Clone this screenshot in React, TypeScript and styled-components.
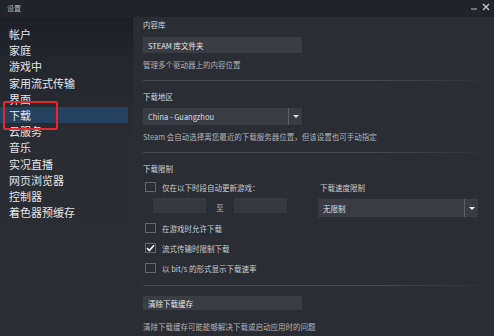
import React from "react";
import styled, { createGlobalStyle } from "styled-components";

const GlobalStyle = createGlobalStyle`
  html, body {
    margin: 0;
    padding: 0;
    background: #2a2d33;
  }
  body {
    font-family: "Noto Sans CJK SC", "Noto Sans", sans-serif;
  }
`;

const menu = [
  "帐户",
  "家庭",
  "游戏中",
  "家用流式传输",
  "界面",
  "下载",
  "云服务",
  "音乐",
  "实况直播",
  "网页浏览器",
  "控制器",
  "着色器预缓存",
];

const App = () => {
  return (
    <>
      <GlobalStyle />
      <Window>
        <TitleBar>
          <Title>设置</Title>
          <WinButtons>
            <svg width="7" height="7" viewBox="0 0 7 7">
              <path d="M0 6H6" stroke="#b9bdc2" strokeWidth="1" />
            </svg>
            <svg width="8" height="8" viewBox="0 0 8 8">
              <path d="M1 1L7 7M7 1L1 7" stroke="#c9cdd1" strokeWidth="1.3" />
            </svg>
          </WinButtons>
        </TitleBar>

        <Body>
          <Sidebar>
            {menu.map((m) => (
              <MenuItem key={m} $active={m === "下载"}>
                {m}
              </MenuItem>
            ))}
            <Mark />
          </Sidebar>

          <Content>
            <Header>内容库</Header>
            <Button>STEAM 库文件夹</Button>
            <Desc>管理多个驱动器上的内容位置</Desc>
            <Divider />

            <Header $top={11}>下载地区</Header>
            <Select $width={159}>
              <span>China - Guangzhou</span>
              <Caret />
            </Select>
            <Desc>Steam 会自动选择离您最近的下载服务器位置，但该设置也可手动指定</Desc>
            <Divider />

            <Header $top={11}>下载限制</Header>
            <LimitRow>
              <LeftCol>
                <CheckRow $top={8}>
                  <Box />
                  仅在以下时段自动更新游戏：
                </CheckRow>
                <TimeRow>
                  <TimeInput />
                  <To>至</To>
                  <TimeInput />
                </TimeRow>
              </LeftCol>
              <RightCol>
                <SpeedLabel>下载速度限制</SpeedLabel>
                <Select $width={160} $height={18}>
                  <span>无限制</span>
                  <Caret />
                </Select>
              </RightCol>
            </LimitRow>

            <CheckRow $top={6}>
              <Box />
              在游戏时允许下载
            </CheckRow>
            <CheckRow $top={10}>
              <Box>
                <svg width="9" height="8" viewBox="0 0 9 8">
                  <path d="M1 4.2L3.4 6.5L8 1.2" fill="none" stroke="#f2f3f4" strokeWidth="1.6" />
                </svg>
              </Box>
              流式传输时限制下载
            </CheckRow>
            <CheckRow $top={10}>
              <Box />
              以 bit/s 的形式显示下载速率
            </CheckRow>
            <Divider $top={12} />

            <Button $top={10} $height={14}>清除下载缓存</Button>
            <Desc $top={12}>清除下载缓存可能能够解决下载或启动应用时的问题</Desc>
          </Content>
        </Body>
      </Window>
    </>
  );
};

export default App;

const Window = styled.div`
  width: 494px;
  height: 336px;
  overflow: hidden;
  display: flex;
  flex-direction: column;
  background: #2a2d33;
`;

const TitleBar = styled.div`
  height: 17px;
  flex-shrink: 0;
  display: flex;
  align-items: center;
  justify-content: space-between;
  padding: 0 4px 0 7px;
  background: #212429;
`;

const Title = styled.div`
  font-size: 7px;
  color: #b4b8bd;
  line-height: 10px;
  margin-top: -2px;
`;

const WinButtons = styled.div`
  display: flex;
  align-items: center;
  gap: 4px;
  margin-top: -4px;
`;

const Body = styled.div`
  flex: 1;
  display: flex;
`;

const Sidebar = styled.div`
  width: 133px;
  flex-shrink: 0;
  position: relative;
  padding-top: 9px;
  box-sizing: border-box;
  background: linear-gradient(#1c1f25 0px, #23262c 40px, #292c32 120px, #2a2d33 100%);
`;

const MenuItem = styled.div<{ $active?: boolean }>`
  height: 16.2px;
  line-height: 16.2px;
  padding-left: 9px;
  margin-right: 5px;
  font-size: 11px;
  color: #e4e6e8;
  background: ${(p) => (p.$active ? "#244260" : "transparent")};
`;

const Mark = styled.div`
  position: absolute;
  left: 3px;
  top: 84px;
  width: 51px;
  height: 25px;
  border: 2px solid #e12a30;
  border-radius: 2px;
`;

const Content = styled.div`
  flex: 1;
  padding: 3px 31px 0 10px;
  display: flex;
  flex-direction: column;
  align-items: flex-start;
`;

const Header = styled.div<{ $top?: number }>`
  font-size: 7.5px;
  line-height: 10px;
  color: #d2d5d8;
  margin-top: ${(p) => p.$top ?? 0}px;
`;

const Button = styled.div<{ $top?: number; $height?: number }>`
  width: 159px;
  height: ${(p) => p.$height ?? 16}px;
  margin-top: ${(p) => p.$top ?? 7}px;
  box-sizing: border-box;
  padding-left: 5px;
  display: flex;
  align-items: center;
  font-size: 7.5px;
  color: #e2e4e6;
  background: #3a3d44;
`;

const Desc = styled.div<{ $top?: number }>`
  font-size: 7.5px;
  line-height: 10px;
  color: #aeb2b7;
  white-space: nowrap;
  margin-top: ${(p) => p.$top ?? 7}px;
`;

const Divider = styled.div<{ $top?: number }>`
  align-self: stretch;
  height: 1px;
  margin-top: ${(p) => p.$top ?? 10}px;
  background: linear-gradient(to right, #43474e 70%, rgba(67, 71, 78, 0.2));
`;

const Select = styled.div<{ $width: number; $height?: number }>`
  width: ${(p) => p.$width}px;
  height: ${(p) => p.$height ?? 17}px;
  margin-top: 6px;
  box-sizing: border-box;
  padding-left: 5px;
  display: flex;
  align-items: center;
  justify-content: space-between;
  font-size: 7.5px;
  color: #dcdee0;
  background: #393c43;
`;

const Caret = styled.div`
  width: 14px;
  height: 100%;
  box-sizing: border-box;
  border-left: 1px solid #5b5f66;
  margin: 0;
  display: flex;
  align-items: center;
  justify-content: center;
  &::after {
    content: "";
    border-left: 3px solid transparent;
    border-right: 3px solid transparent;
    border-top: 3px solid #e8e9ea;
  }
`;

const LimitRow = styled.div`
  display: flex;
  align-items: flex-start;
`;

const LeftCol = styled.div`
  width: 175px;
  display: flex;
  flex-direction: column;
`;

const RightCol = styled.div`
  display: flex;
  flex-direction: column;
`;

const SpeedLabel = styled.div`
  font-size: 7.5px;
  line-height: 10px;
  color: #c9ccd0;
  margin-top: 9px;
  padding-left: 2px;
`;

const CheckRow = styled.div<{ $top?: number }>`
  display: flex;
  align-items: center;
  gap: 6px;
  height: 10px;
  margin-top: ${(p) => p.$top ?? 0}px;
  padding-left: 2px;
  font-size: 7.5px;
  color: #c9ccd0;
  white-space: nowrap;
`;

const Box = styled.div`
  width: 11px;
  height: 10px;
  box-sizing: border-box;
  border: 1px solid #62666d;
  display: flex;
  align-items: center;
  justify-content: center;
  flex-shrink: 0;
`;

const TimeRow = styled.div`
  display: flex;
  align-items: center;
  margin-top: 6px;
  padding-left: 10px;
`;

const TimeInput = styled.div`
  width: 53px;
  height: 15px;
  background: #363940;
`;

const To = styled.div`
  width: 28px;
  text-align: center;
  font-size: 7.5px;
  color: #b9bcc0;
  padding-top: 4px;
`;
